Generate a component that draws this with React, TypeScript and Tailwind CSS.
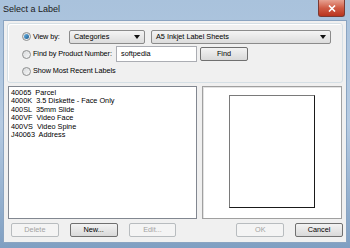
import { FC, ReactNode } from "react";

const items = [
  ["40065", "Parcel"],
  ["4000K", "3.5 Diskette - Face Only"],
  ["400SL", "35mm Slide"],
  ["400VF", "Video Face"],
  ["400VS", "Video Spine"],
  ["J40063", "Address"],
];

const Radio: FC<{ checked?: boolean; label: string }> = ({ checked, label }) => (
  <div className="flex items-center gap-[2px] whitespace-nowrap tracking-[-0.1px]">
    <span className="flex h-[9px] w-[9px] shrink-0 items-center justify-center rounded-full border border-[#8e8f8f] bg-gradient-to-br from-[#d8dadc] to-[#f7f7f7]">
      {checked && <span className="h-[5px] w-[5px] rounded-full bg-gradient-to-br from-[#69b4e6] to-[#1b5c8f]" />}
    </span>
    <span>{label}</span>
  </div>
);

const Combo: FC<{ label: string; className: string }> = ({ label, className }) => (
  <div
    className={`flex h-[14px] items-center justify-between rounded-[2px] border border-[#8b8b8b] bg-gradient-to-b from-[#f4f4f4] to-[#dcdcdc] pl-[4px] pr-[4px] ${className}`}
  >
    <span>{label}</span>
    <svg width="6" height="4" viewBox="0 0 6 4">
      <path d="M0 0H6L3 4Z" fill="#111" />
    </svg>
  </div>
);

const Btn: FC<{ children: ReactNode; disabled?: boolean; className?: string }> = ({
  children,
  disabled,
  className = "",
}) => (
  <div
    className={`flex h-[14px] w-[48px] items-center justify-center rounded-[2px] border ${
      disabled
        ? "border-[#b8bcbf] bg-[#f4f4f4] text-[#a3a3a3]"
        : "border-[#707070] bg-gradient-to-b from-[#f3f3f3] to-[#d9d9d9] text-black"
    } ${className}`}
  >
    {children}
  </div>
);

export default function App() {
  return (
    <div
      className="flex h-[248px] w-[350px] flex-col bg-gradient-to-b from-[#a9c2dc] via-[#b6cbe2] to-[#7f9fc2] text-[7.3px] leading-none text-black"
      style={{ fontFamily: '"Liberation Sans", Arial, sans-serif' }}
    >
      <div className="flex h-[20px] items-start justify-between pl-[3px]">
        <span className="mt-[5px] text-[9px] text-[#1a1a1a]">Select a Label</span>
        <div className="mr-[5px] flex h-[17px] w-[27px] items-center justify-center rounded-b-[3px] border border-t-0 border-[#7a3a33] bg-gradient-to-b from-[#e6a191] via-[#cf5b45] to-[#b9331d]">
          <svg width="8" height="7" viewBox="0 0 8 7">
            <path d="M1 0.5L7 6.5M7 0.5L1 6.5" stroke="#fff" strokeWidth="1.6" />
          </svg>
        </div>
      </div>

      <div className="mx-[3px] mb-[5px] flex flex-1 flex-col border border-[#8aa4c1] bg-[#f0f0f0] px-[3px] pt-[2px]">
        <div className="flex h-[60px] flex-col rounded-[3px] border border-[#d5dfe5] pl-[14px] pt-[5px] shadow-[inset_1px_1px_0_#fff]">
          <div className="flex h-[15px] items-center">
            <div className="w-[47px]">
              <Radio checked label="View by:" />
            </div>
            <Combo label="Categories" className="w-[76px]" />
            <Combo label="A5 Inkjet Label Sheets" className="ml-[6px] w-[180px]" />
          </div>
          <div className="mt-[2px] flex h-[16px] items-center">
            <div className="w-[94px]">
              <Radio label="Find by Product Number:" />
            </div>
            <div className="flex h-[16px] w-[81px] items-center border border-[#abadb3] bg-white pl-[4px]">
              softpedia
            </div>
            <Btn className="ml-[3px]">Find</Btn>
          </div>
          <div className="mt-[3px] flex h-[12px] items-center">
            <Radio label="Show Most Recent Labels" />
          </div>
        </div>

        <div className="mt-[3px] flex gap-[5px] pl-[1px]">
          <div className="h-[133px] w-[189px] border border-[#828790] bg-white pl-[2px] pt-[2px] leading-[8.4px]">
            {items.map(([code, name]) => (
              <div key={code} className="whitespace-pre">
                {code}  {name}
              </div>
            ))}
          </div>
          <div className="flex h-[133px] w-[140px] justify-center border border-[#a0a0a0] bg-white pt-[8px] shadow-[inset_1px_1px_0_#e3e3e3]">
            <div className="h-[113px] w-[86px] border border-[#7a7a7a] border-b-[#1a1a1a] border-r-[#1a1a1a] bg-white" />
          </div>
        </div>

        <div className="mt-[4px] flex pl-[4px]">
          <Btn disabled>Delete</Btn>
          <Btn className="ml-[11px]">New...</Btn>
          <Btn disabled className="ml-[11px]">
            Edit...
          </Btn>
          <Btn disabled className="ml-[60px]">
            OK
          </Btn>
          <Btn className="ml-[11px]">Cancel</Btn>
        </div>
      </div>
    </div>
  );
}
